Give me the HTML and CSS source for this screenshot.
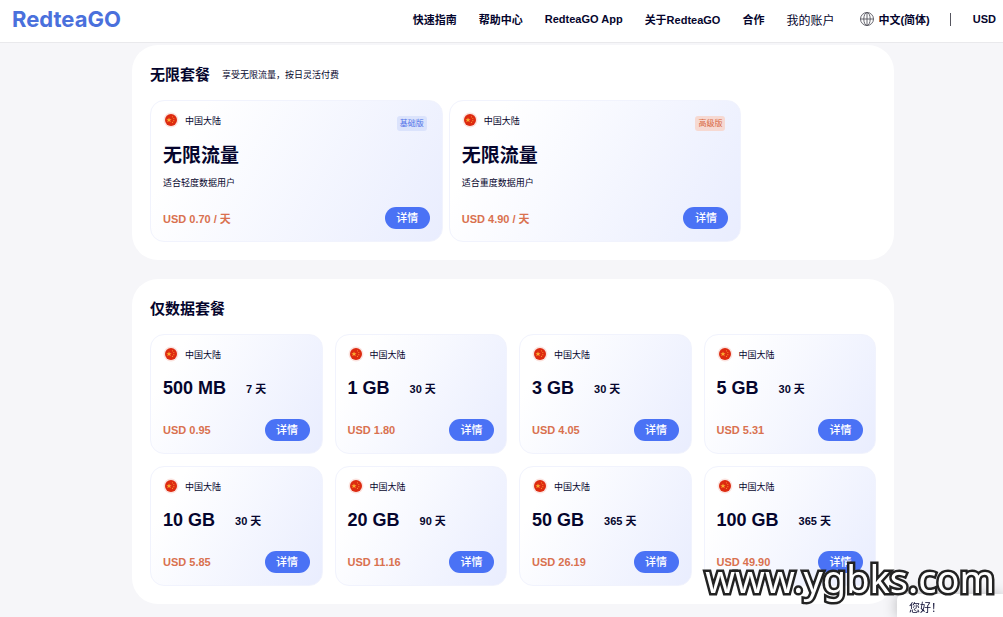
FILE: index.html
```html
<!DOCTYPE html>
<html lang="zh-CN">
<head>
  <meta charset="UTF-8">
  <meta name="viewport" content="width=device-width, initial-scale=1.0">
  <title>RedteaGO</title>
  <link rel="stylesheet" href="styles.css">
</head>
<body>
  <svg width="0" height="0" class="sprite" aria-hidden="true">
    <symbol id="flag-cn" viewBox="0 0 16 16">
      <circle cx="8" cy="8" r="7.5" fill="#fbe3df"/>
      <circle cx="8" cy="8" r="6" fill="#dd2a10"/>
      <path d="M6 5.4l.7 1.8h1.9L7.100 8.300l.6 1.900L6 9.100l-1.700 1.100.6-1.900-1.500-1.100h1.900z" fill="#fbb034"/>
      <circle cx="9.500" cy="4.800" r=".6" fill="#f98a2c"/>
      <circle cx="10.800" cy="6.500" r=".6" fill="#f98a2c"/>
      <circle cx="10.800" cy="8.700" r=".6" fill="#f98a2c"/>
      <circle cx="9.500" cy="10.400" r=".6" fill="#f98a2c"/>
    </symbol>
  </svg>

  <header class="header">
    <a class="logo" href="#">RedteaGO</a>
    <nav class="nav">
      <a href="#">快速指南</a>
      <a href="#">帮助中心</a>
      <a href="#">RedteaGO App</a>
      <a href="#">关于RedteaGO</a>
      <a href="#">合作</a>
      <a class="account" href="#">我的账户</a>
      <button class="language" type="button">
        <svg width="14" height="14" viewBox="0 0 14 14" fill="none" stroke="#55555f" stroke-width=".9">
          <circle cx="7" cy="7" r="6.500"/>
          <ellipse cx="7" cy="7" rx="3.200" ry="6.500"/>
          <path d="M7 .5v13M.5 7h13"/>
        </svg>
        中文(简体)
      </button>
      <span class="divider"></span>
      <button class="currency" type="button">USD</button>
    </nav>
  </header>

  <main class="main">
    <section class="panel">
      <div class="panel-header">
        <h2>无限套餐</h2>
        <p>享受无限流量，按日灵活付费</p>
      </div>
      <div class="unlimited-grid">
        <article class="card">
          <div class="card-top">
            <div class="region"><svg class="flag"><use href="#flag-cn"/></svg>中国大陆</div>
            <span class="tag tag-basic">基础版</span>
          </div>
          <h3>无限流量</h3>
          <p class="description">适合轻度数据用户</p>
          <div class="card-bottom">
            <span class="price">USD 0.70 / 天</span>
            <button class="btn" type="button">详情</button>
          </div>
        </article>
        <article class="card">
          <div class="card-top">
            <div class="region"><svg class="flag"><use href="#flag-cn"/></svg>中国大陆</div>
            <span class="tag tag-premium">高级版</span>
          </div>
          <h3>无限流量</h3>
          <p class="description">适合重度数据用户</p>
          <div class="card-bottom">
            <span class="price">USD 4.90 / 天</span>
            <button class="btn" type="button">详情</button>
          </div>
        </article>
      </div>
    </section>

    <section class="panel">
      <div class="panel-header">
        <h2>仅数据套餐</h2>
      </div>
      <div class="data-grid">
        <article class="card">
          <div class="region"><svg class="flag"><use href="#flag-cn"/></svg>中国大陆</div>
          <div class="plan"><h3>500 MB</h3><span class="days">7 天</span></div>
          <div class="card-bottom">
            <span class="price">USD 0.95</span>
            <button class="btn" type="button">详情</button>
          </div>
        </article>
        <article class="card">
          <div class="region"><svg class="flag"><use href="#flag-cn"/></svg>中国大陆</div>
          <div class="plan"><h3>1 GB</h3><span class="days">30 天</span></div>
          <div class="card-bottom">
            <span class="price">USD 1.80</span>
            <button class="btn" type="button">详情</button>
          </div>
        </article>
        <article class="card">
          <div class="region"><svg class="flag"><use href="#flag-cn"/></svg>中国大陆</div>
          <div class="plan"><h3>3 GB</h3><span class="days">30 天</span></div>
          <div class="card-bottom">
            <span class="price">USD 4.05</span>
            <button class="btn" type="button">详情</button>
          </div>
        </article>
        <article class="card">
          <div class="region"><svg class="flag"><use href="#flag-cn"/></svg>中国大陆</div>
          <div class="plan"><h3>5 GB</h3><span class="days">30 天</span></div>
          <div class="card-bottom">
            <span class="price">USD 5.31</span>
            <button class="btn" type="button">详情</button>
          </div>
        </article>
        <article class="card">
          <div class="region"><svg class="flag"><use href="#flag-cn"/></svg>中国大陆</div>
          <div class="plan"><h3>10 GB</h3><span class="days">30 天</span></div>
          <div class="card-bottom">
            <span class="price">USD 5.85</span>
            <button class="btn" type="button">详情</button>
          </div>
        </article>
        <article class="card">
          <div class="region"><svg class="flag"><use href="#flag-cn"/></svg>中国大陆</div>
          <div class="plan"><h3>20 GB</h3><span class="days">90 天</span></div>
          <div class="card-bottom">
            <span class="price">USD 11.16</span>
            <button class="btn" type="button">详情</button>
          </div>
        </article>
        <article class="card">
          <div class="region"><svg class="flag"><use href="#flag-cn"/></svg>中国大陆</div>
          <div class="plan"><h3>50 GB</h3><span class="days">365 天</span></div>
          <div class="card-bottom">
            <span class="price">USD 26.19</span>
            <button class="btn" type="button">详情</button>
          </div>
        </article>
        <article class="card">
          <div class="region"><svg class="flag"><use href="#flag-cn"/></svg>中国大陆</div>
          <div class="plan"><h3>100 GB</h3><span class="days">365 天</span></div>
          <div class="card-bottom">
            <span class="price">USD 49.90</span>
            <button class="btn" type="button">详情</button>
          </div>
        </article>
      </div>
    </section>
  </main>

  <div class="chat">您好！</div>
  <div class="watermark">www.ygbks.com</div>
</body>
</html>
```
FILE: styles.css
```css
* {
  margin: 0;
  padding: 0;
  box-sizing: border-box;
}

body {
  font-family: "Liberation Sans", "Noto Sans CJK SC", sans-serif;
  font-size: 11px;
  background: #f6f6f9;
  color: #05052d;
}

a {
  color: inherit;
  text-decoration: none;
}

button {
  font: inherit;
  color: inherit;
  background: none;
  border: none;
  cursor: pointer;
}

.sprite {
  position: absolute;
}

.header {
  display: flex;
  align-items: center;
  justify-content: space-between;
  height: 43px;
  padding: 0 7px 4px 12px;
  background: #fff;
  border-bottom: 1px solid #e9e9ec;
}

.logo {
  font-family: Inter, sans-serif;
  font-size: 22px;
  font-weight: 700;
  color: #4a70dc;
}

.nav {
  display: flex;
  align-items: center;
  gap: 22px;
  font-weight: 700;
  white-space: nowrap;
}

.account {
  font-size: 12px;
  font-weight: 400;
}

.language {
  display: flex;
  align-items: center;
  gap: 4px;
  margin: 0 -2px 0 4px;
}

.divider {
  width: 1px;
  height: 13px;
  background: #55555f;
}

.main {
  display: grid;
  gap: 19px;
  padding: 2px 109px 13px 132px;
}

.panel {
  padding: 17px 18px 18px;
  background: #fff;
  border-radius: 26px;
}

.panel-header {
  display: flex;
  align-items: center;
  gap: 12px;
  height: 22px;
  margin-bottom: 16px;
}

.panel-header h2 {
  font-size: 15px;
}

.panel-header p {
  padding-top: 3px;
  font-size: 9px;
}

.unlimited-grid {
  display: grid;
  grid-template-columns: 41fr 41fr 18fr;
  gap: 6px;
}

.data-grid {
  display: grid;
  grid-template-columns: repeat(4, 1fr);
  gap: 12px;
}

.card {
  padding: 11px 12px 12px;
  border: 1px solid #f1f3fd;
  border-radius: 14px;
  background: linear-gradient(120deg, #fff 15%, #e9edfe 100%);
}

.card-top {
  display: flex;
  justify-content: space-between;
}

.region {
  display: flex;
  align-items: center;
  gap: 6px;
  height: 16px;
  font-size: 9px;
}

.flag {
  width: 16px;
  height: 16px;
}

.tag {
  height: 15px;
  margin: 4px 3px 0 0;
  padding: 0 3px;
  border-radius: 3px;
  font-size: 8px;
  line-height: 15px;
}

.tag-basic {
  background: #dbe3fc;
  color: #4f71e8;
}

.tag-premium {
  background: #f6d9d2;
  color: #d8683f;
}

.card h3 {
  font-size: 18px;
  line-height: 28px;
}

.description {
  font-size: 9px;
  line-height: 14px;
}

.plan {
  display: flex;
  align-items: center;
  gap: 20px;
  height: 28px;
}

.days {
  font-weight: 700;
}

.card-bottom {
  display: flex;
  align-items: center;
  justify-content: space-between;
}

.price {
  font-weight: 700;
  color: #d9714f;
}

.btn {
  width: 45px;
  height: 22px;
  border-radius: 11px;
  background: #4a72f5;
  color: #fff;
  font-weight: 500;
  line-height: 22px;
}

.unlimited-grid .card h3 {
  margin-top: 11px;
  font-size: 19px;
}

.unlimited-grid .description {
  margin: 6px 0 17px;
}

.data-grid .plan {
  margin: 12px 0 17px;
}

.chat {
  position: fixed;
  right: 0;
  bottom: 0;
  width: 106px;
  height: 23px;
  padding: 6px 12px;
  border-radius: 6px 0 0 0;
  background: #fff;
  box-shadow: 0 0 14px rgba(0, 0, 0, 0.25);
  line-height: 17px;
}

.watermark {
  position: fixed;
  right: 8px;
  bottom: 11px;
  font-family: "Noto Sans", sans-serif;
  font-size: 38px;
  font-weight: 400;
  line-height: 56px;
  color: #fff;
  -webkit-text-stroke: 5px #222;
  stroke-linejoin: round;
  paint-order: stroke fill;
}
```
